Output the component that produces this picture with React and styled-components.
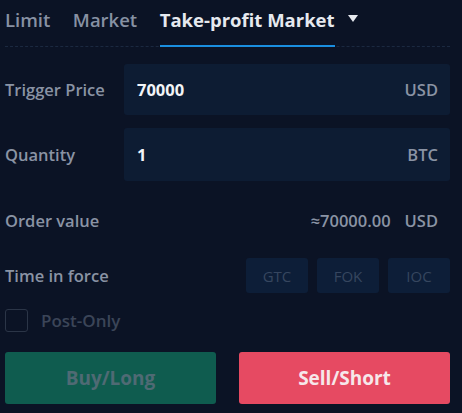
import styled, { createGlobalStyle } from "styled-components";

const GlobalStyle = createGlobalStyle`
  html, body {
    margin: 0;
    padding: 0;
    background: #0b1325;
  }
  body {
    font-family: "Open Sans", "Liberation Sans", sans-serif;
  }
`;

const Panel = styled.div`
  width: 462px;
  height: 413px;
  box-sizing: border-box;
  padding: 0 12px 0 5px;
  background: #0b1325;
  display: flex;
  flex-direction: column;
`;

const Tabs = styled.div`
  display: flex;
  align-items: flex-end;
  height: 47px;
  border-bottom: 1px dashed #1b2940;
  box-sizing: border-box;
`;

const Tab = styled.div`
  display: flex;
  align-items: center;
  height: 100%;
  box-sizing: border-box;
  margin-right: ${(p) => (p.active ? 0 : 22.5)}px;
  padding-bottom: 8px;
  font-size: 18.5px;
  font-weight: ${(p) => (p.active ? 700 : 600)};
  color: ${(p) => (p.active ? "#e6e9ef" : "#8791a3")};
  border-bottom: 2px solid ${(p) => (p.active ? "#1a8ee0" : "transparent")};
  margin-bottom: -1px;
`;

const Caret = styled.span`
  align-self: center;
  width: 0;
  height: 0;
  margin: 0 0 10px 13px;
  border-left: 5px solid transparent;
  border-right: 5px solid transparent;
  border-top: 7px solid #e6e9ef;
`;

const Row = styled.div`
  display: flex;
  align-items: center;
  justify-content: space-between;
  margin-top: ${(p) => p.mt || 0}px;
  height: ${(p) => p.h || 51}px;
`;

const Label = styled.div`
  font-size: 16.5px;
  font-weight: 600;
  color: #8a93a4;
  width: 119px;
  flex-shrink: 0;
`;

const Field = styled.div`
  flex: 1;
  height: 100%;
  display: flex;
  align-items: center;
  justify-content: space-between;
  padding: 0 12px 0 13px;
  background: #0d1c33;
  border-radius: 3px;
`;

const Value = styled.span`
  font-size: 16.5px;
  font-weight: 700;
  color: #f2f4f7;
`;

const Unit = styled.span`
  font-size: 16.5px;
  font-weight: 600;
  color: #8a93a4;
`;

const Total = styled.div`
  display: flex;
  gap: 14px;
  padding-right: 12px;
  font-size: 16.5px;
  font-weight: 600;
  color: #8a93a4;
`;

const Choices = styled.div`
  display: flex;
  gap: 9px;
  height: 35px;
`;

const Choice = styled.div`
  width: 62px;
  display: flex;
  align-items: center;
  justify-content: center;
  background: #0d1e38;
  border-radius: 3px;
  font-size: 15px;
  color: #36465f;
`;

const CheckRow = styled.label`
  display: flex;
  align-items: center;
  gap: 13px;
  margin-top: 15px;
  height: 24px;
`;

const Box = styled.span`
  width: 23px;
  height: 23px;
  box-sizing: border-box;
  border: 1px solid #2b3547;
  border-radius: 3px;
`;

const CheckText = styled.span`
  font-size: 17px;
  font-weight: 600;
  color: #3b4558;
`;

const Actions = styled.div`
  display: flex;
  justify-content: space-between;
  margin-top: 20px;
`;

const ActionButton = styled.div`
  width: 211px;
  height: 52px;
  display: flex;
  align-items: center;
  justify-content: center;
  border-radius: 3px;
  font-size: 19px;
  font-weight: 700;
  background: ${(p) => (p.sell ? "#e64a62" : "#0f5c4f")};
  color: ${(p) => (p.sell ? "#f6e7ea" : "#4f6a74")};
`;

export default function App() {
  return (
    <>
      <GlobalStyle />
      <Panel>
        <Tabs>
          <Tab>Limit</Tab>
          <Tab>Market</Tab>
          <Tab active>Take-profit Market</Tab>
          <Caret />
        </Tabs>
        <Row mt={17}>
          <Label>Trigger Price</Label>
          <Field>
            <Value>70000</Value>
            <Unit>USD</Unit>
          </Field>
        </Row>
        <Row mt={13} h={53}>
          <Label>Quantity</Label>
          <Field>
            <Value>1</Value>
            <Unit>BTC</Unit>
          </Field>
        </Row>
        <Row mt={20} h={38}>
          <Label>Order value</Label>
          <Total>
            <span>≈70000.00</span>
            <span>USD</span>
          </Total>
        </Row>
        <Row mt={19} h={35}>
          <Label>Time in force</Label>
          <Choices>
            <Choice>GTC</Choice>
            <Choice>FOK</Choice>
            <Choice>IOC</Choice>
          </Choices>
        </Row>
        <CheckRow>
          <Box />
          <CheckText>Post-Only</CheckText>
        </CheckRow>
        <Actions>
          <ActionButton>Buy/Long</ActionButton>
          <ActionButton sell>Sell/Short</ActionButton>
        </Actions>
      </Panel>
    </>
  );
}
